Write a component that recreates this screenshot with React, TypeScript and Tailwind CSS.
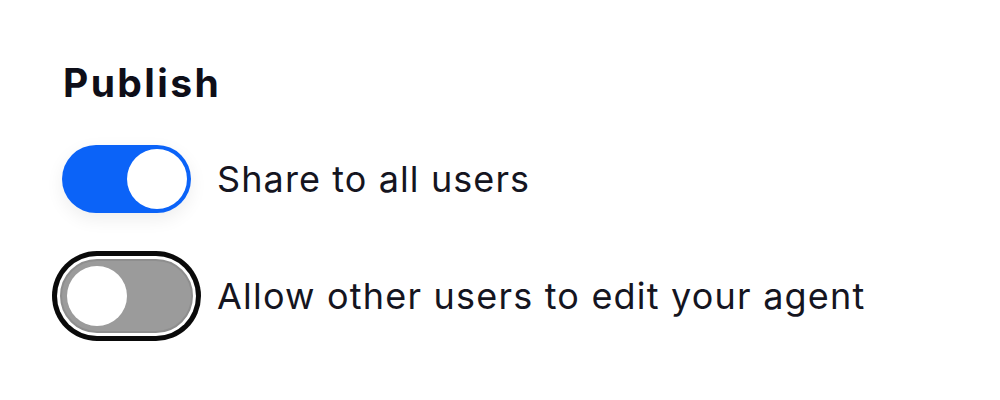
import React from "react";

export default function App() {
  return (
    <div
      className="w-[1000px] h-[400px] bg-white overflow-hidden pl-[62px] pt-[60px]"
      style={{ fontFamily: "Inter, 'Noto Sans', sans-serif" }}
    >
      <h2 className="text-[39px] leading-[46px] font-bold tracking-[2.4px] text-[#0e0e18] ml-[1px]">Publish</h2>

      <div className="mt-[39px] flex items-center gap-[26px]">
        <button
          className="w-[129px] h-[68px] rounded-full bg-[#0b63f8] p-[4px] flex justify-end items-center shadow-[0_6px_18px_rgba(0,0,0,0.07)]"
          aria-pressed="true"
        >
          <span className="block w-[60px] h-[60px] rounded-full bg-white" />
        </button>
        <span className="text-[36px] leading-[40px] tracking-[1.1px] text-[#15151f]">Share to all users</span>
      </div>

      <div className="mt-[46px] flex items-center gap-[24px]">
        <button
          className="-ml-[2px] w-[133px] h-[74px] rounded-full bg-[#9b9b9b] border-[2px] border-[#8e8e8e] px-[5px] flex justify-start items-center ring-[5px] ring-[#0a0a0a] ring-offset-[3px] ring-offset-white"
          aria-pressed="false"
        >
          <span className="block w-[60px] h-[60px] rounded-full bg-white" />
        </button>
        <span className="text-[36px] leading-[40px] tracking-[1.2px] text-[#15151f]">Allow other users to edit your agent</span>
      </div>
    </div>
  );
}
